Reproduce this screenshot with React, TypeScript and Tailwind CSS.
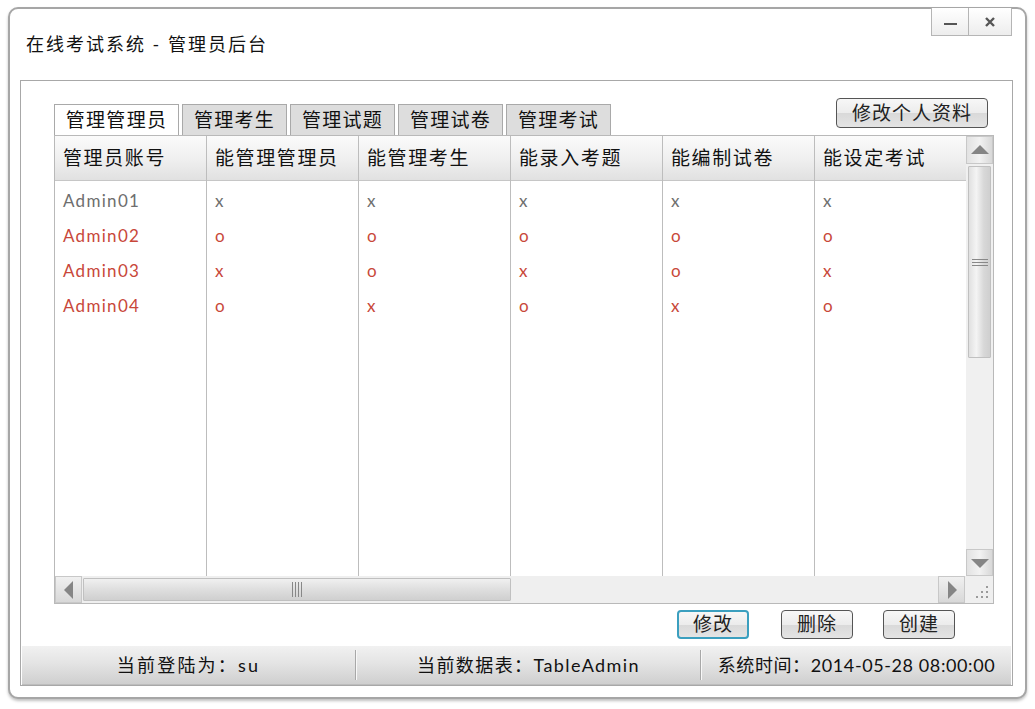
import React from 'react';

const CJK = "font-['Lato','Noto_Sans_CJK_SC',sans-serif]";

const columns = ['管理员账号', '能管理管理员', '能管理考生', '能录入考题', '能编制试卷', '能设定考试'];

const rows: { name: string; muted: boolean; flags: string[] }[] = [
  { name: 'Admin01', muted: true, flags: ['x', 'x', 'x', 'x', 'x'] },
  { name: 'Admin02', muted: false, flags: ['o', 'o', 'o', 'o', 'o'] },
  { name: 'Admin03', muted: false, flags: ['x', 'o', 'x', 'o', 'x'] },
  { name: 'Admin04', muted: false, flags: ['o', 'x', 'o', 'x', 'o'] },
];

const tabs = ['管理管理员', '管理考生', '管理试题', '管理试卷', '管理考试'];

function Arrow({ dir }: { dir: 'up' | 'down' | 'left' | 'right' }) {
  const pts = {
    up: '1,11 10,2 19,11',
    down: '1,3 10,12 19,3',
    left: '11,1 2,10 11,19',
    right: '3,1 12,10 3,19',
  }[dir];
  const size = dir === 'up' || dir === 'down' ? { w: 20, h: 14 } : { w: 14, h: 20 };
  return (
    <svg width={size.w} height={size.h} viewBox={`0 0 ${size.w} ${size.h}`}>
      <polygon points={pts} fill="#858585" />
    </svg>
  );
}

function PushButton({ label, focused, className }: { label: string; focused?: boolean; className?: string }) {
  return (
    <div
      className={`flex items-center justify-center rounded-[4px] bg-[linear-gradient(#f7f7f7_0%,#ececec_50%,#d9d9d9_51%,#e4e4e4_100%)] text-[19px] tracking-[1px] text-[#222] ${CJK} ${
        focused ? 'border-2 border-[#3b9fbf]' : 'border border-[#555]'
      } ${className ?? ''}`}
    >
      {label}
    </div>
  );
}

function VScrollBar() {
  return (
    <div className="flex w-[28px] flex-col bg-[#f0f0f0]">
      <div className="flex h-[28px] items-center justify-center border border-[#c8c8c8] bg-[linear-gradient(90deg,#e2e2e2,#f2f2f2_50%,#d8d8d8)]">
        <Arrow dir="up" />
      </div>
      <div className="mx-[2px] mt-[2px] flex h-[192px] items-center justify-center rounded-[1px] border border-[#c0c0c0] bg-[linear-gradient(90deg,#e0e0e0,#f4f4f4_35%,#d8d8d8_70%,#cfcfcf)]">
        <div className="flex flex-col gap-[2px]">
          <div className="h-[1px] w-[16px] bg-[#888]" />
          <div className="h-[1px] w-[16px] bg-[#888]" />
          <div className="h-[1px] w-[16px] bg-[#888]" />
        </div>
      </div>
      <div className="flex-1" />
      <div className="flex h-[27px] items-center justify-center border border-[#c8c8c8] bg-[linear-gradient(90deg,#e2e2e2,#f2f2f2_50%,#d8d8d8)]">
        <Arrow dir="down" />
      </div>
    </div>
  );
}

function HScrollBar() {
  return (
    <div className="flex h-[27px] w-[911px] bg-[#efefef]">
      <div className="flex w-[27px] items-center justify-center border border-[#c8c8c8] bg-[linear-gradient(#f0f0f0,#d8d8d8)]">
        <Arrow dir="left" />
      </div>
      <div className="my-[2px] ml-[1px] flex w-[428px] items-center justify-center rounded-[1px] border border-[#c0c0c0] bg-[linear-gradient(#f0f0f0,#e0e0e0_45%,#cfcfcf)]">
        <div className="flex gap-[2px]">
          <div className="h-[15px] w-[1px] bg-[#888]" />
          <div className="h-[15px] w-[1px] bg-[#888]" />
          <div className="h-[15px] w-[1px] bg-[#888]" />
          <div className="h-[15px] w-[1px] bg-[#888]" />
        </div>
      </div>
      <div className="flex-1" />
      <div className="flex w-[27px] items-center justify-center border border-[#c8c8c8] bg-[linear-gradient(#f0f0f0,#d8d8d8)]">
        <Arrow dir="right" />
      </div>
    </div>
  );
}

function ResizeGrip() {
  return (
    <div className="flex h-[27px] w-[28px] items-end justify-end bg-[#efefef] p-[3px]">
      <svg width="16" height="16" viewBox="0 0 16 16">
        {[
          [13, 3],
          [13, 8],
          [8, 8],
          [13, 13],
          [8, 13],
          [3, 13],
        ].map(([x, y], i) => (
          <rect key={i} x={x - 1} y={y - 1} width="2" height="2" fill="#9a9a9a" />
        ))}
      </svg>
    </div>
  );
}

function DataTable() {
  return (
    <div className="ml-[33px] flex h-[470px] w-[940px] flex-col border border-[#b9b9b9] bg-white">
      <div className="flex flex-1">
        <div className="flex w-[911px]">
          {columns.map((col, ci) => (
            <div
              key={col}
              className={`flex flex-col ${ci < 5 ? 'w-[152px] border-r border-[#bdbdbd]' : 'w-[151px]'}`}
            >
              <div
                className={`flex h-[45px] items-center border-b border-[#c6c6c6] bg-[linear-gradient(#fbfbfb,#f0f0f0_50%,#e1e1e1)] pl-[8px] text-[19px] tracking-[1.6px] text-[#111] ${CJK}`}
              >
                {col}
              </div>
              <div className="flex flex-col pt-[2px]">
                {rows.map((r) => (
                  <div
                    key={r.name}
                    className={`flex h-[35px] items-center pl-[8px] ${r.muted ? 'text-[#6e6e6e]' : 'text-[#c8473a]'} font-['Lato','Open_Sans',sans-serif] ${
                      ci === 0 ? 'text-[17px] tracking-[1.3px]' : 'text-[17px]'
                    }`}
                  >
                    {ci === 0 ? r.name : r.flags[ci - 1]}
                  </div>
                ))}
              </div>
            </div>
          ))}
        </div>
        <VScrollBar />
      </div>
      <div className="flex">
        <HScrollBar />
        <ResizeGrip />
      </div>
    </div>
  );
}

function StatusCell({ text, className }: { text: React.ReactNode; className: string }) {
  return (
    <div className={`flex items-center justify-center text-[18px] text-[#111] ${CJK} ${className}`}>{text}</div>
  );
}

function StatusDivider() {
  return (
    <div className="flex h-full py-[4px]">
      <div className="w-[1px] bg-[#a8a8a8]" />
      <div className="w-[1px] bg-[#f8f8f8]" />
    </div>
  );
}

export default function App() {
  return (
    <div className="h-[709px] w-[1035px] overflow-hidden bg-white pl-[8px] pt-[7px]">
      <div className="flex h-[692px] w-[1019px] flex-col rounded-[10px] border-2 border-[#a6a6a6] bg-white shadow-[0_2px_3px_rgba(0,0,0,0.25)]">
        {/* title bar */}
        <div className="flex h-[71px] items-start">
          <div className={`pl-[16px] pt-[22px] text-[18px] tracking-[2px] text-[#111] ${CJK}`}>
            在线考试系统 - 管理员后台
          </div>
          <div className="ml-auto mr-[13px] -mt-[1px] flex h-[28px] border border-t-0 border-[#b5b5b5] bg-[linear-gradient(#ffffff,#ededed)]">
            <div className="flex w-[37px] items-center justify-center border-r border-[#b5b5b5]">
              <div className="mt-[4px] h-[2px] w-[13px] bg-[#555]" />
            </div>
            <div className="flex w-[42px] items-center justify-center">
              <svg width="12" height="12" viewBox="0 0 12 12">
                <path d="M2 2 L10 10 M10 2 L2 10" stroke="#555" strokeWidth="2.4" />
              </svg>
            </div>
          </div>
        </div>

        {/* main panel */}
        <div className="ml-[10px] flex h-[606px] w-[993px] flex-col border border-[#a8a8a8]">
          <div className="flex h-[54px] items-end pl-[33px]">
            <div className="flex gap-[3px]">
              {tabs.map((t, i) => (
                <div
                  key={t}
                  className={`flex h-[31px] items-center justify-center border border-b-0 border-[#a9a9a9] text-[19px] tracking-[1.3px] text-[#111] ${CJK} ${
                    i === 0 ? 'w-[125px] bg-white' : 'w-[105px] bg-[#dddddd]'
                  }`}
                >
                  {t}
                </div>
              ))}
            </div>
            <PushButton label="修改个人资料" className="mb-[8px] ml-auto mr-[24px] mt-[17px] h-[30px] w-[152px] self-start" />
          </div>

          <DataTable />

          <div className="mt-[6px] flex h-[29px] justify-end pr-[57px]">
            <PushButton label="修改" focused className="w-[72px]" />
            <PushButton label="删除" className="ml-[32px] w-[72px]" />
            <PushButton label="创建" className="ml-[30px] w-[72px]" />
          </div>

          <div className="mx-[1px] mt-[7px] flex h-[39px] border-b border-[#bdbdbd] bg-[linear-gradient(#f1f1f1,#e4e4e4_45%,#cfcfcf)]">
            <StatusCell className="w-[333px] tracking-[2.2px]" text={<>当前登陆为：su</>} />
            <StatusDivider />
            <StatusCell className="w-[343px] tracking-[1.4px]" text={<>当前数据表：TableAdmin</>} />
            <StatusDivider />
            <StatusCell className="flex-1 tracking-[0.6px]" text={<>系统时间：2014-05-28 08:00:00</>} />
          </div>
        </div>
      </div>
    </div>
  );
}
